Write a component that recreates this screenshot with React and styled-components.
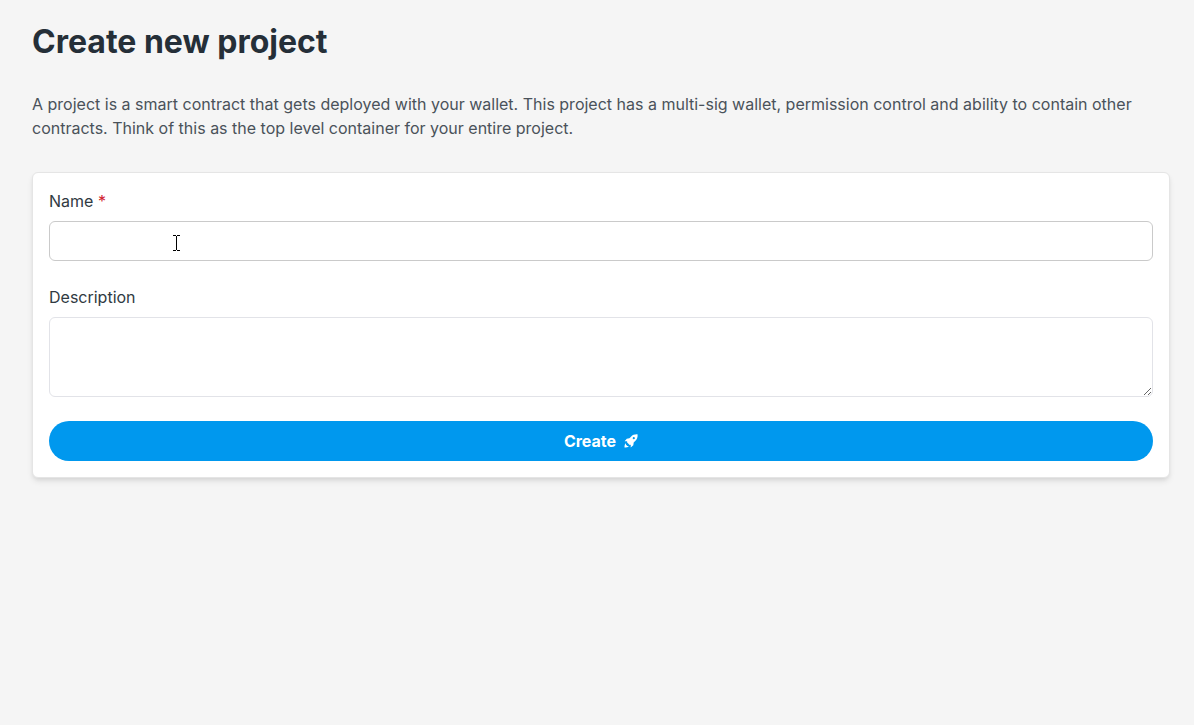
import React from "react";
import styled, { createGlobalStyle } from "styled-components";

const GlobalStyle = createGlobalStyle`
  *, *::before, *::after { box-sizing: border-box; }
  body {
    margin: 0;
    background: #f5f5f5;
    color: #303a42;
    font-family: Inter, "Liberation Sans", sans-serif;
    font-size: 16px;
    line-height: 24px;
  }
`;

const Page = styled.main`
  padding: 16px 24px 32px 32px;
`;

const Title = styled.h1`
  margin: 0 0 24px;
  color: #252f38;
  font-size: 32px;
  font-weight: 700;
  line-height: 52px;
`;

const Intro = styled.p`
  margin: 0 0 32px;
  color: #4a525a;
  font-weight: 400;
`;

const Card = styled.form`
  position: relative;
  display: flex;
  flex-direction: column;
  gap: 24px;
  padding: 16px;
  border: 1px solid #e5e5e5;
  border-radius: 6px;
  background: #fff;
  box-shadow: 0 4px 6px -1px rgba(0, 0, 0, 0.1), 0 2px 4px -1px rgba(0, 0, 0, 0.06);
`;

const Field = styled.div`
  display: flex;
  flex-direction: column;
  gap: 8px;
`;

const Label = styled.label`
  font-weight: 400;
`;

const Required = styled.span`
  color: #d0202c;
`;

const Input = styled.input`
  width: 100%;
  height: 40px;
  padding: 0 16px;
  border: 1px solid #cacaca;
  border-radius: 6px;
  background: #fff;
  color: inherit;
  font: inherit;
`;

const TextArea = styled.textarea`
  display: block;
  width: 100%;
  height: 80px;
  padding: 8px 16px;
  border: 1px solid #e2e3e8;
  border-radius: 6px;
  background: #fff;
  color: inherit;
  font: inherit;
  resize: vertical;
`;

const CreateButton = styled.button`
  display: flex;
  align-items: center;
  justify-content: center;
  gap: 8px;
  height: 40px;
  border: 0;
  border-radius: 20px;
  background: #0098ee;
  color: #fff;
  font: inherit;
  font-weight: 700;
`;

const Pointer = styled.svg`
  position: absolute;
  top: 61px;
  left: 139px;
  pointer-events: none;
`;

function RocketIcon() {
  return (
    <svg width="14" height="14" viewBox="0 0 14 14" fill="currentColor" aria-hidden="true">
      <path
        fillRule="evenodd"
        d="M13.600 0.400C10.800 0.200 8.600 1 7 2.800L5.400 4.300L2.800 4.700L0.600 7.300L3.200 7.200L3 8.300L5.700 11L6.800 10.800L6.700 13.400L9.300 11.200L9.700 8.600L11.200 7C13 5.400 13.800 3.200 13.600 0.400ZM9.800 3.100a1.100 1.100 0 1 1 0 2.200a1.100 1.100 0 1 1 0-2.200Z"
      />
      <path d="M1.800 9.200C0.700 10 0.500 11.800 0.500 13.500C2.200 13.500 4 13.300 4.800 12.200L3.300 12L2 10.700Z" />
    </svg>
  );
}

export default function App() {
  return (
    <>
      <GlobalStyle />
      <Page>
        <Title>Create new project</Title>
        <Intro>
          A project is a smart contract that gets deployed with your wallet. This
          project has a multi-sig wallet, permission control and ability to contain
          other contracts. Think of this as the top level container for your entire
          project.
        </Intro>
        <Card>
          <Field>
            <Label htmlFor="name">
              Name <Required aria-hidden="true">*</Required>
            </Label>
            <Input id="name" type="text" required />
          </Field>
          <Field>
            <Label htmlFor="description">Description</Label>
            <TextArea id="description" />
          </Field>
          <CreateButton type="submit">
            Create
            <RocketIcon />
          </CreateButton>
          <Pointer width="9" height="18" viewBox="0 0 9 18" aria-hidden="true">
            <path d="M1 1.5h3M5 1.5h3M4.500 2v14M1 16.500h3M5 16.500h3" fill="none" stroke="#000" />
          </Pointer>
        </Card>
      </Page>
    </>
  );
}
